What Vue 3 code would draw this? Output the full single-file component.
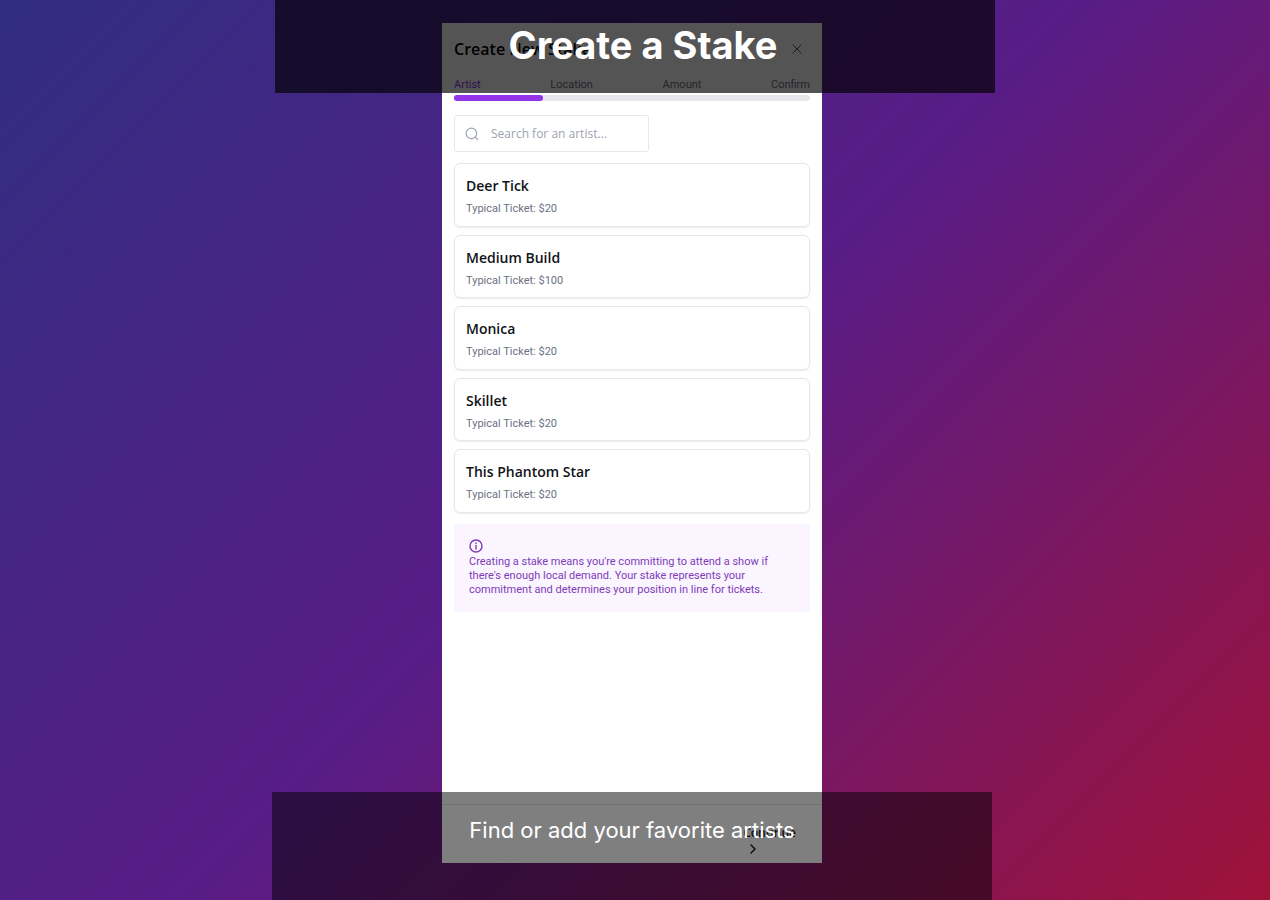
<script setup>
import { ref } from 'vue'

const steps = ['Artist', 'Location', 'Amount', 'Confirm']
const current = ref(0)
const query = ref('')
const artists = [
  { name: 'Deer Tick', price: 20 },
  { name: 'Medium Build', price: 100 },
  { name: 'Monica', price: 20 },
  { name: 'Skillet', price: 20 },
  { name: 'This Phantom Star', price: 20 },
]
</script>

<template>
  <main class="stage">
    <section class="phone">
      <header class="head">
        <h2>Create New Stake</h2>
        <button class="close" type="button" aria-label="Close">
          <svg viewBox="0 0 10 10"><path d="M1 1l8 8M9 1l-8 8" /></svg>
        </button>
      </header>

      <ol class="steps">
        <li v-for="(step, i) in steps" :key="step" :class="{ active: i === current }">{{ step }}</li>
      </ol>
      <div class="track">
        <div class="fill" :style="{ width: ((current + 1) / steps.length) * 100 + '%' }"></div>
      </div>

      <label class="search">
        <svg viewBox="0 0 24 24"><circle cx="11" cy="11" r="9" /><path d="M17.5 17.5L22 22" /></svg>
        <input v-model="query" type="text" placeholder="Search for an artist..." aria-label="Search for an artist" />
      </label>

      <div class="artists">
        <button v-for="a in artists" :key="a.name" class="artist" type="button">
          <span class="name">{{ a.name }}</span>
          <span class="price">Typical Ticket: ${{ a.price }}</span>
        </button>
      </div>

      <aside class="info">
        <svg viewBox="0 0 14 14">
          <circle cx="7" cy="7" r="6" />
          <path d="M7 6.5v3.5M7 4v.5" />
        </svg>
        <p>Creating a stake means you're committing to attend a show if there's enough local demand. Your stake represents your commitment and determines your position in line for tickets.</p>
      </aside>

      <footer class="foot">
        <button class="continue" type="button">
          <span>Continue</span>
          <svg viewBox="0 0 6 10"><path d="M1 1l4 4-4 4" /></svg>
        </button>
      </footer>
    </section>

    <div class="caption top"><h1>Create a Stake</h1></div>
    <div class="caption bottom"><p>Find or add your favorite artists</p></div>
  </main>
</template>

<style>
body {
  margin: 0;
}
</style>

<style scoped>
* {
  box-sizing: border-box;
}
h1, h2, p, ol {
  margin: 0;
  padding: 0;
}
button, input {
  font: inherit;
  color: inherit;
  background: none;
  border: 0;
  padding: 0;
}
svg {
  display: block;
  fill: none;
  stroke: currentColor;
  stroke-linecap: round;
  stroke-linejoin: round;
}
.stage {
  position: relative;
  min-height: 100vh;
  padding: 23px 6px 37px 0;
  overflow: hidden;
  display: flex;
  justify-content: center;
  background: linear-gradient(135deg, #312e81, #581c87 50%, #9f1239);
  font-family: "Open Sans", "Noto Sans", sans-serif;
}
.phone {
  width: 380px;
  max-width: 100%;
  display: flex;
  flex-direction: column;
  padding: 0 12px;
  background: #fff;
  color: #111318;
}
.head {
  display: flex;
  align-items: center;
  justify-content: space-between;
  height: 52px;
  padding-right: 8px;
}
.head h2 {
  font-size: 16px;
  line-height: 24px;
  font-weight: 600;
  color: #000;
}
.close svg {
  width: 10px;
  height: 10px;
  color: #4b5563;
}
.steps {
  display: flex;
  justify-content: space-between;
  list-style: none;
  font-family: Roboto, sans-serif;
  font-size: 11px;
  line-height: 19px;
  padding-bottom: 1px;
  color: #6b7280;
}
.steps .active {
  color: #9333ea;
}
.track {
  height: 6px;
  border-radius: 3px;
  background: #e5e7eb;
}
.fill {
  height: 100%;
  border-radius: 3px;
  background: #9333ea;
}
.search {
  display: flex;
  align-items: center;
  gap: 12px;
  width: 195px;
  height: 37px;
  margin-top: 14px;
  padding: 0 10px;
  border: 1px solid #e5e7eb;
  border-radius: 3px;
}
.search svg {
  flex: none;
  width: 14px;
  height: 14px;
  color: #9ca3af;
  stroke-width: 2;
}
.search input {
  width: 100%;
  min-width: 0;
  font-size: 12px;
  outline: 0;
}
.search input::placeholder {
  color: #9ca3af;
  opacity: 1;
}
.artists {
  display: grid;
  grid-auto-rows: 1fr;
  gap: 8px;
  min-height: 350px;
  margin-top: 11px;
}
.artist {
  display: flex;
  flex-direction: column;
  gap: 4px;
  padding: 11px 11px 9px;
  text-align: left;
  border: 1px solid #e5e7eb;
  border-radius: 6px;
  box-shadow: 0 1px 2px rgba(0, 0, 0, 0.08);
}
.name {
  font-size: 14px;
  line-height: 22px;
  font-weight: 600;
}
.price {
  font-family: Roboto, sans-serif;
  font-size: 11px;
  line-height: 15px;
  color: #6b7280;
}
.info {
  margin-top: 11px;
  padding: 15px;
  border-radius: 4px;
  background: #faf5ff;
  color: #7e3bb8;
}
.info svg {
  width: 14px;
  height: 14px;
  stroke-width: 1.4;
}
.info p {
  padding-top: 2px;
  font-family: Roboto, sans-serif;
  font-size: 11px;
  line-height: 14px;
}
.foot {
  display: flex;
  justify-content: flex-end;
  height: 59px;
  margin: auto -12px 0;
  padding: 19px 26px 0;
  border-top: 1px solid #e5e7eb;
}
.continue {
  display: flex;
  flex-direction: column;
  align-items: flex-start;
  font-size: 12px;
  line-height: 18px;
  font-weight: 600;
}
.continue svg {
  width: 6px;
  height: 10px;
  margin: 2px 0 0 7px;
  stroke-width: 1.4;
}
.caption {
  position: absolute;
  width: 720px;
  max-width: 100%;
  left: 50%;
  display: flex;
  justify-content: center;
  color: #fff;
  font-family: Inter, sans-serif;
}
.top {
  top: 0;
  height: 93px;
  margin-left: -360px;
  padding-left: 16px;
  background: rgba(0, 0, 0, 0.67);
}
.top h1 {
  font-size: 38px;
  line-height: 91px;
  font-weight: 700;
}
.bottom {
  bottom: 0;
  height: 108px;
  margin-left: -363px;
  background: rgba(0, 0, 0, 0.5);
}
.bottom p {
  font-size: 22px;
  line-height: 76px;
  font-weight: 400;
}
</style>
